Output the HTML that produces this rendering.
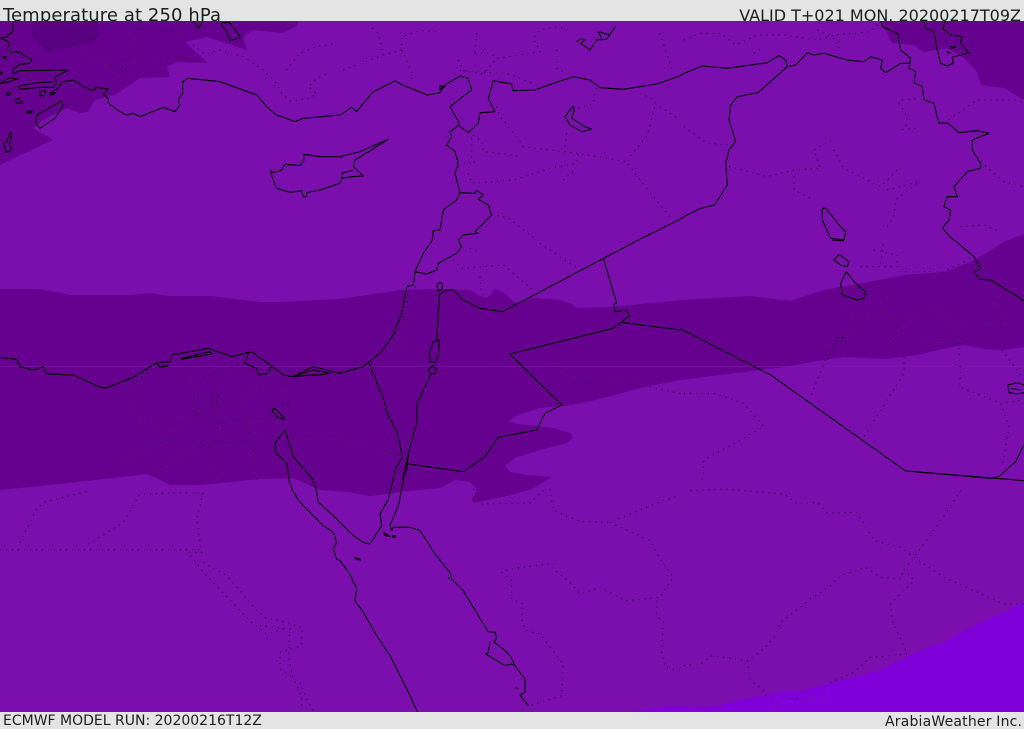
<!DOCTYPE html>
<html><head><meta charset="utf-8"><style>
html,body{margin:0;padding:0;background:#e4e4e4}
svg{display:block}
.c{fill:none;stroke:#000;stroke-width:3.3;stroke-linejoin:round}
.d{fill:none;stroke:#000;stroke-opacity:.85;stroke-width:3;stroke-dasharray:3 15}
.l{fill:none;stroke:#000;stroke-width:1.1}
text{font-family:"DejaVu Sans","Liberation Sans",sans-serif;fill:#1c1c1c}
</style></head><body>
<svg width="1024" height="729" viewBox="0 0 1024 729" xmlns="http://www.w3.org/2000/svg">
<rect width="1024" height="729" fill="#e4e4e4"/>
<text x="3" y="21" font-size="18" textLength="218">Temperature at 250 hPa</text>
<text x="1021" y="21" font-size="16" text-anchor="end">VALID T+021 MON. 20200217T09Z</text>
<text x="3" y="725" font-size="14">ECMWF MODEL RUN: 20200216T12Z</text>
<text x="885" y="726" font-size="14" textLength="137">ArabiaWeather Inc.</text>
<rect x="0" y="21" width="1024" height="691" fill="#7a0fae"/>
<path fill="#65008f" d="M0 289 40 289 70 295 130 295 150 293 170 296 210 296 260 302 280 302 340 299 400 290 440 289 470 290 480 296 487 298 495 289 503 292 515 303 535 298 560 300 570 303 577 308 610 307 684 300 750 296 790 301 824 290 864 283 904 275 944 272 971 262 991 250 1004 242 1024 234 1024 347 1001 350 984 349 964 345 951 347 917 355 884 359 844 357 817 361 784 367 751 371 680 380 640 388 607 397 583 403 563 406 540 408 517 415 509 421 517 424 537 426 553 428 570 433 573 438 567 443 540 450 517 457 505 465 510 472 527 475 552 477 532 489 507 496 473 503 472 499 477 489 470 482 455 480 440 488 430 489 400 492 370 496 348 492 320 490 293 478 260 479 200 485 170 485 158 479 147 474 105 479 50 485 0 490Z"/>
<path fill="#65008f" d="M0 21 298 21 298 25 283 33 253 30 243 37 247 50 207 37 185 42 208 63 177 62 167 67 170 77 140 78 115 95 95 100 88 112 80 113 67 108 43 120 33 128 53 140 10 160 0 165Z"/>
<path fill="#5a0082" d="M33 21 97 21 101 33 93 42 70 48 47 52 32 37 33 27Z"/>
<path fill="#65008f" d="M881 21 889 37 892 43 914 45 924 52 947 48 964 58 977 72 981 85 1004 88 1024 100 1024 21Z"/>
<path fill="#8000d9" d="M1024 602 1004 612 967 629 944 642 917 652 904 659 877 671 827 684 801 691 784 691 741 700 717 706 694 707 680 706 660 707 630 712 1024 712Z"/>
<rect x="0" y="366" width="1024" height="1" fill="#7f1fa8" opacity=".55"/>

<!-- joins between tiles -->
<path class="l" d="M680 76 684 73M680 219 684 217M340 183 342 178M289 480 292 489M313 480 316 489M393 480 391 489M403 480 402 489M340 157 342 157M340 115 340 115"/>

<g transform="scale(.3333)">
<path class="d" d="M410 85 470 97 520 90 550 110M410 85 390 130 395 160 380 180 365 205 340 225M580 135 615 163 660 150 730 170 790 210 830 250 845 280 870 303 930 295 950 280 925 260 945 240 990 215M860 210 900 160 950 140 1010 130M250 155 320 195 370 205 410 230M380 180 440 190 510 170 600 182M130 148 250 125 300 100"/>
<path class="c" d="M40 63 38 95 20 110 0 115 25 125 32 158 60 155 75 170 95 178 90 190 60 193 38 208 40 222 60 212 205 210 165 232 170 250 160 262 120 262 60 268 55 258 115 248 160 245M150 280 170 268 190 245 220 240 250 260 280 272 290 262 325 268 310 285 325 295 325 310 360 335 380 345 400 340 420 350 490 322 525 335 540 315 535 300 548 280 548 245 565 235 660 245 770 285 800 320 830 345 885 365 910 355 1020 345"/>
<path class="c" d="M810 510 820 518 845 510 855 493 900 497 912 480 912 463 960 470 1020 470M1020 550 960 570 920 578 920 590 910 590 905 572 870 577 830 565 820 540 810 510"/>
<path class="c" d="M110 345 185 303 190 315 165 355 120 385 108 370 110 345ZM30 398 20 425 10 430 20 458 35 450 30 430 35 398ZM0 250 25 235 55 235 30 245 0 250ZM18 280 30 275 32 285 20 285ZM45 300 55 295 68 308 50 310ZM80 335 95 332 95 338 80 338ZM120 275 135 272 133 290 120 285ZM150 280 165 278 160 284 150 284ZM0 215 8 218 0 225M8 170 20 172 15 176 8 170ZM580 63 597 85 608 63M665 68 690 68 722 112 690 122 680 95 665 75Z"/>
</g>

<g transform="translate(340 0) scale(.3333)">
<path class="d" d="M10 210 130 165 115 100 85 75M130 165 185 150 185 110 240 92 300 95M185 150 215 215 215 250M405 160 450 160 475 175 600 155 580 115 600 90 650 80 690 90M355 180 370 212 430 222 470 175M360 212 500 220 590 255M470 320 480 350 530 410 550 440 710 460 860 485 900 540 990 650M400 405 425 425 430 455 520 465 535 470M395 415 395 470 405 490 355 490M385 520 395 550 520 540 630 505 710 490 715 460M670 540 710 505M770 265 760 310 700 330M680 400 675 440M650 150 650 205 670 215M900 280 945 300 945 320 920 410 870 470M945 310 1020 360M455 645 500 650 590 720M410 100 405 160M960 100 980 160 1000 220"/>
<path class="c" d="M0 345 35 322 50 335 70 310 100 275 165 243 195 258 262 285 300 278 310 258 360 228 385 235 395 270 375 285 330 320 358 370 345 385 330 395 335 410 320 435 345 455 355 490 345 520 360 578 350 600 310 630 300 690 280 692 277 720"/>
<path class="c" d="M360 578 405 580 410 572 430 585 415 598 445 615 455 645 405 695 415 700 370 705 355 720"/>
<path class="c" d="M358 378 385 398 415 370 420 338 465 335 445 295 460 242 515 252 520 272 585 270 640 250 700 230 750 240 780 263 850 268 950 252 1020 228"/>
<path class="c" d="M0 470 60 455 145 418 70 465 45 480 40 500 70 528 35 530 5 535 5 520 40 510"/>
<path class="c" d="M700 318 675 350 690 375 725 395 755 388 735 380 695 355 703 330 700 318ZM710 125 725 115 735 120 722 130 750 150 770 120 800 118 825 80 810 105 775 95 785 115M300 258 315 260 300 270Z"/>
<path class="c" d="M895 720 1020 658"/>
</g>

<g transform="translate(684 0) scale(.3333)">
<path class="d" d="M0 120 50 100 110 100 155 135 220 105 300 105 400 120 450 105 560 95 590 65M400 90 465 125 465 160M210 160 240 140M0 380 70 430 140 435M135 500 250 530 330 510 410 505 390 450 450 415M330 530 330 570 390 600M450 450 480 505 590 560 640 510M610 570 705 545 635 600 630 650 610 680M655 300 710 295M645 310 670 350 665 380M655 388 705 385M780 370 850 320 880 300 1000 300 1020 310M890 485 960 545 1020 560M830 680 900 675 950 695"/>
<path class="c" d="M0 220 55 198 130 205 250 188 285 167 305 180 310 200 335 195 370 158 390 165 420 160 490 180 540 185 560 170 595 180 590 205 605 218 650 190 680 190"/>
<path class="c" d="M590 63 595 80 640 100 650 150 680 175 675 205 695 215 690 248 715 260 720 300 750 310 765 370 790 368 825 398 880 392 915 400 865 420 865 450 890 490 890 505 850 515 810 560 820 590 790 590 780 620 800 630 795 660 775 685 808 720"/>
<path class="c" d="M0 650 50 625 92 615 130 555 125 490 135 450 155 425 135 360 140 315 160 290 222 278 310 200"/>
<path class="c" d="M415 625 425 625 470 680 485 695 480 720M415 625 415 660 440 715 480 720"/>
<path class="c" d="M720 63 725 85 750 95 760 150 770 190 790 198 808 190 805 172 855 158 830 130 835 110 800 105 775 85 785 63M800 140 815 140 805 146ZM790 155 798 158 792 160Z"/>
</g>

<g transform="translate(0 240) scale(.3333)">
<path class="d" d="M400 425 400 520 500 585 575 530 650 485 730 485 790 420M470 378 400 430M575 420 650 400 720 370M575 420 590 520 650 550 750 535 810 535M650 400 650 550 660 600 610 610 450 700M750 540 760 640 770 720M860 420 865 520 885 525M600 460 700 480M330 700 470 600 640 610 760 605 820 590M880 590 1010 590M620 640 640 680 660 720"/>
<path class="c" d="M1020 400 990 393 940 380 880 410 850 405 810 375 755 335 695 350 625 325 515 345 510 365 470 368 400 412 315 445 285 435 220 405 140 402 130 380 100 390 60 380 50 358 0 352"/>
<path class="c" d="M545 355 630 335 635 342 590 350 545 358ZM745 340 735 370 770 385 775 405 805 400 815 378M880 410 940 390 990 400 960 405 930 405ZM470 368 480 382 505 378 485 378M815 510 825 505 850 530 855 540 830 530Z"/>
<path class="c" d="M855 570 825 610 825 635 860 670 868 720M855 570 880 650 940 720"/>
</g>

<g transform="translate(340 240) scale(.3333)">
<path class="d" d="M0 595 185 645M600 10 720 90M340 60 365 85 490 75 580 150M390 25 415 35M420 110 425 160 445 190M225 140 245 185M205 165 190 260 160 285 205 325M655 320 650 370 700 430 850 425 1020 460"/>
<path class="c" d="M277 0 250 40 225 95 220 135 200 140 185 220 160 285 120 340 70 380 0 400"/>
<path class="c" d="M355 0 365 20 350 40 295 70 290 90 260 102 225 95"/>
<path class="c" d="M895 0 488 215 420 205 370 180 340 150 320 150 297 165 295 230 290 300"/>
<path class="c" d="M297 128 290 135 295 152 305 150 308 130ZM280 305 298 300 295 345 285 368 270 365 268 340 280 305ZM265 385 280 378 290 390 285 402 270 402Z"/>
<path class="c" d="M272 405 250 450 232 490 230 550 205 640 188 720M790 55 830 190 822 192 825 215 860 210 868 228 820 265 510 342 665 495 615 520 590 570 475 592 435 650 370 695 203 672"/>
<path class="c" d="M845 247 1020 270M88 370 135 490 140 515 170 575 188 650 170 680 158 720M205 640 200 690 188 720"/>
</g>

<g transform="translate(684 240) scale(.3333)">
<path class="d" d="M0 460 90 460 180 490 240 560 60 660 55 720M520 260 440 320 380 470M440 180 520 240 610 215 600 150M610 215 640 250 630 340M660 350 660 400 540 590M640 250 750 205 820 255 955 265 940 170M820 270 830 405 825 440 950 490 975 560 955 680M720 310 830 310M950 490 1020 480M955 330 1020 420M530 80 640 80 650 95 780 95 850 60 870 50M570 30 640 45 640 80M590 70 600 0M430 360 480 265"/>
<path class="c" d="M810 0 870 50 890 85 872 95 885 118 920 120 1020 182M-12 266 0 272 260 405 665 693 920 715 945 710 995 665 1020 615M665 693 1020 722"/>
<path class="c" d="M450 60 465 43 495 65 490 80 470 75ZM487 95 470 130 475 165 520 180 540 175 545 155 515 130 495 105ZM972 435 1000 428 1020 435M972 435 975 458 1000 462 1020 458M445 0 480 3M980 445 1010 450"/>
</g>

<g transform="translate(0 489) scale(.3333)">
<path class="d" d="M0 182 600 182M60 160 110 60 130 40 270 5M265 165 370 100 420 15 610 10 590 90 605 190 565 190 610 250 755 400 800 435 850 420M610 220 680 260 750 340 790 385 860 400 905 415 905 470 840 490 840 540 900 580 925 640 940 665M780 410 870 420 865 490 875 555 905 625 905 665"/>
<path class="c" d="M875 0 900 40 935 75 970 110 1000 130 1010 160 1000 180 1010 210 1020 215M948 0 955 40 1000 80 1020 100"/>
</g>

<g transform="translate(340 489) scale(.3333)">
<path class="d" d="M400 0 420 45 570 42 610 5M630 0 640 65 720 97 810 100 968 35 1020 20M810 100 930 155 960 210 1000 265 960 325 860 335 780 295 720 315 690 280 640 240 630 225 510 240 485 250 515 275 515 330 550 345 545 400 560 425 600 435 670 525 665 620 570 650M950 335 950 380 970 400 965 490 975 535 1020 545"/>
<path class="c" d="M153 0 145 30 120 75 125 110 90 165M185 0 175 50 150 110 155 125 160 115 210 115 240 125 260 155 285 195 330 250 335 270 370 305 430 405 445 428 465 430 470 445 462 460 490 480 510 500 525 530 555 570 555 610 540 618 565 650"/>
<path class="c" d="M0 100 40 140 70 160 90 165M0 215 30 255 50 300 45 335 70 370 110 440 150 500 210 620 232 668"/>
<path class="c" d="M45 205 60 210 60 215 45 208ZM130 130 150 142 135 140ZM158 140 166 140 164 146 158 145ZM450 460 445 490 438 495 495 530 515 525 525 530M325 265 330 270M528 596 533 600"/>
</g>

<g transform="translate(684 489) scale(.3333)">
<path class="d" d="M0 530 50 525 85 500 190 515 240 480 270 445 290 400 380 330 440 290 470 260 545 235 590 265 650 270 660 240 690 205 750 125 830 5M20 5 120 0 300 15 340 45 400 40 430 72 520 70 570 155 650 175 690 205 780 265 960 345 1020 345M660 240 690 275 620 345 625 395 670 495 560 505 510 550 430 585 420 635 290 625 265 665M190 515 200 575 240 605 250 640 270 630"/>
</g>
</svg>
</body></html>
